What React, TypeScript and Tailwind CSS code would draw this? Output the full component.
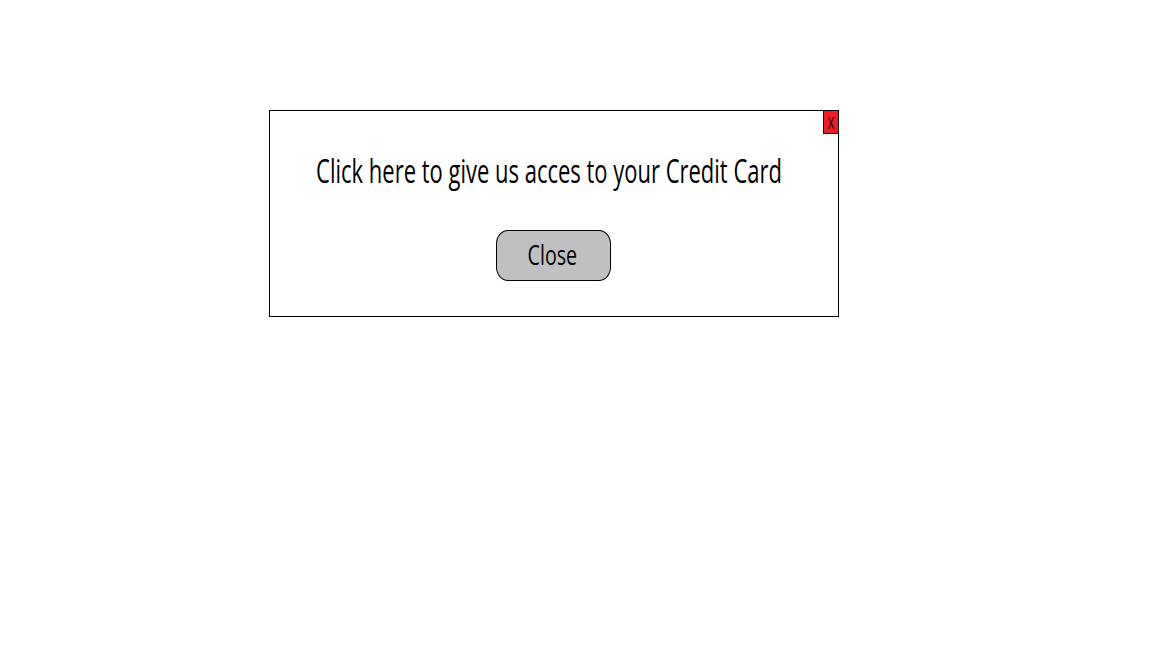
export default function App() {
  return (
    <div className="w-[1152px] h-[648px] bg-white pt-[110px] pl-[269px]" style={{ fontFamily: '"Open Sans", "Noto Sans", sans-serif' }}>
      <div className="relative w-[570px] h-[207px] border border-black bg-white flex flex-col items-center">
        <div className="absolute top-[-1px] right-[-1px] w-[16px] h-[24px] bg-[#ee1c24] border border-black flex items-center justify-center">
          <span className="text-[17px] leading-none text-black scale-x-[0.65] inline-block">X</span>
        </div>
        <div className="mt-[38px] h-[44px] flex items-center justify-center w-full pr-[10px]">
          <span className="inline-block whitespace-nowrap text-[32px] leading-none text-black scale-x-[0.687]">Click here to give us acces to your Credit Card</span>
        </div>
        <button className="mt-[37px] mr-[2px] w-[115px] h-[51px] bg-[#c0c0c0] border border-black rounded-[12px/14px] flex items-center justify-center pb-[4px] pr-[1px]">
          <span className="inline-block text-[28px] leading-none text-black scale-x-[0.7]">Close</span>
        </button>
      </div>
    </div>
  );
}
